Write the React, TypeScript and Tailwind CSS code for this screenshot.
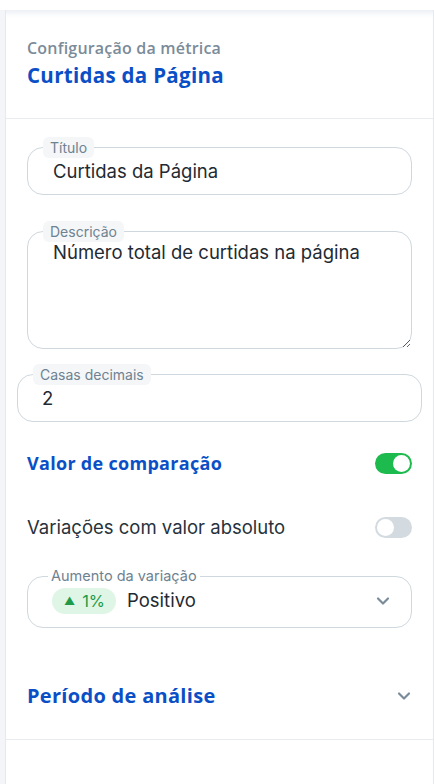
import React, { useState } from 'react';
import { ChevronDown } from 'lucide-react';

const heading = { fontFamily: '"Open Sans", "Noto Sans", sans-serif' };

function Toggle({ on, onClick }: { on: boolean; onClick: () => void }) {
  return (
    <button
      onClick={onClick}
      className={`w-[37px] h-[21px] rounded-full p-[2px] flex items-center ${on ? 'bg-[#1dbb4e] justify-end' : 'bg-[#d3dbe0] justify-start'}`}
    >
      <span className="w-[17px] h-[17px] rounded-full bg-white block" />
    </button>
  );
}

function FloatingField({ label, children, wide }: { label: string; children: React.ReactNode; wide?: boolean }) {
  return (
    <div className={`relative pt-[10px] ${wide ? 'mx-[11px]' : 'mx-[21px]'}`}>
      <span className="absolute top-0 left-[16px] px-[7px] h-[21px] flex items-center rounded-md bg-[#f4f6f8] text-[14px] text-[#6e8291]">
        {label}
      </span>
      {children}
    </div>
  );
}

export default function App() {
  const [compare, setCompare] = useState(true);
  const [absolute, setAbsolute] = useState(false);

  return (
    <div className="w-[434px] h-[784px] bg-white pt-[10px] flex" style={{ fontFamily: 'Inter, "Noto Sans", sans-serif' }}>
      <div className="w-[6px] bg-[#f3f5f8] border-r border-[#e6e9ee]" />
      <div className="flex-1 flex flex-col border-r border-[#e6e9ee] shadow-[inset_0_7px_6px_-5px_rgba(40,70,130,0.12)]">
        {/* Header */}
        <div className="pl-[21px] pt-[28px] pb-[30px] border-b border-[#e8ebef] flex flex-col gap-[4px]">
          <span className="text-[16px] leading-[20px] font-semibold text-[#7b8b99] tracking-[0.2px]" style={heading}>Configuração da métrica</span>
          <span className="text-[20.5px] leading-[26px] font-bold text-[#0b4fc6] tracking-[0.3px]" style={heading}>Curtidas da Página</span>
        </div>

        {/* Form */}
        <div className="flex flex-col pt-[18px]">
          <FloatingField label="Título">
            <input
              readOnly
              value="Curtidas da Página"
              className="w-full h-[48px] rounded-2xl border border-[#cfd8de] px-[25px] text-[18.5px] text-[#1f2a33] outline-none bg-white"
            />
          </FloatingField>

          <div className="h-[26px]" />

          <FloatingField label="Descrição">
            <textarea
              readOnly
              value="Número total de curtidas na página"
              className="w-full h-[118px] block rounded-2xl border border-[#cfd8de] px-[25px] pt-[7px] text-[18.5px] leading-[26px] text-[#1f2a33] outline-none bg-white"
            />
          </FloatingField>

          <div className="h-[15px]" />

          <FloatingField label="Casas decimais" wide>
            <input
              readOnly
              value="2"
              className="w-full h-[48px] rounded-2xl border border-[#cfd8de] px-[24px] text-[18.5px] text-[#1f2a33] outline-none bg-white"
            />
          </FloatingField>

          <div className="mx-[21px] mt-[29px] h-[24px] flex items-center justify-between">
            <span className="text-[18px] leading-[24px] font-bold text-[#0b4fc6] tracking-[0.3px]" style={heading}>Valor de comparação</span>
            <Toggle on={compare} onClick={() => setCompare(!compare)} />
          </div>

          <div className="mx-[21px] mt-[40px] h-[24px] flex items-center justify-between">
            <span className="text-[18.5px] leading-[24px] text-[#27323c]">Variações com valor absoluto</span>
            <Toggle on={absolute} onClick={() => setAbsolute(!absolute)} />
          </div>

          <fieldset className="mx-[21px] mt-[29px] rounded-2xl border border-[#cfd8de] pl-[24px] pr-[20px] pb-[12px]">
            <legend className="ml-[-4px] px-[3px] text-[14.5px] leading-[16px] text-[#6e8291]">Aumento da variação</legend>
            <div className="flex items-center mt-[3px]">
              <span className="h-[26px] pl-[12px] pr-[11px] rounded-full bg-[#dff6e6] flex items-center gap-[7px] text-[16.5px] text-[#1e9a48]">
                <span className="text-[11px]">▲</span>1%
              </span>
              <span className="ml-[11px] text-[18.5px] text-[#1f2a33]">Positivo</span>
              <ChevronDown size={20} strokeWidth={2.6} className="ml-auto mr-[-2px] text-[#7a8c99]" />
            </div>
          </fieldset>

          <div className="mx-[21px] mt-[55px] h-[26px] flex items-center justify-between">
            <span className="text-[20px] leading-[26px] font-bold text-[#0b4fc6] tracking-[0.3px]" style={heading}>Período de análise</span>
            <ChevronDown size={20} strokeWidth={2.6} className="text-[#7a8c99] mr-[-2px]" />
          </div>
          <div className="h-[30px]" />
        </div>
        <div className="border-t border-[#e8ebef]" />
      </div>
    </div>
  );
}
